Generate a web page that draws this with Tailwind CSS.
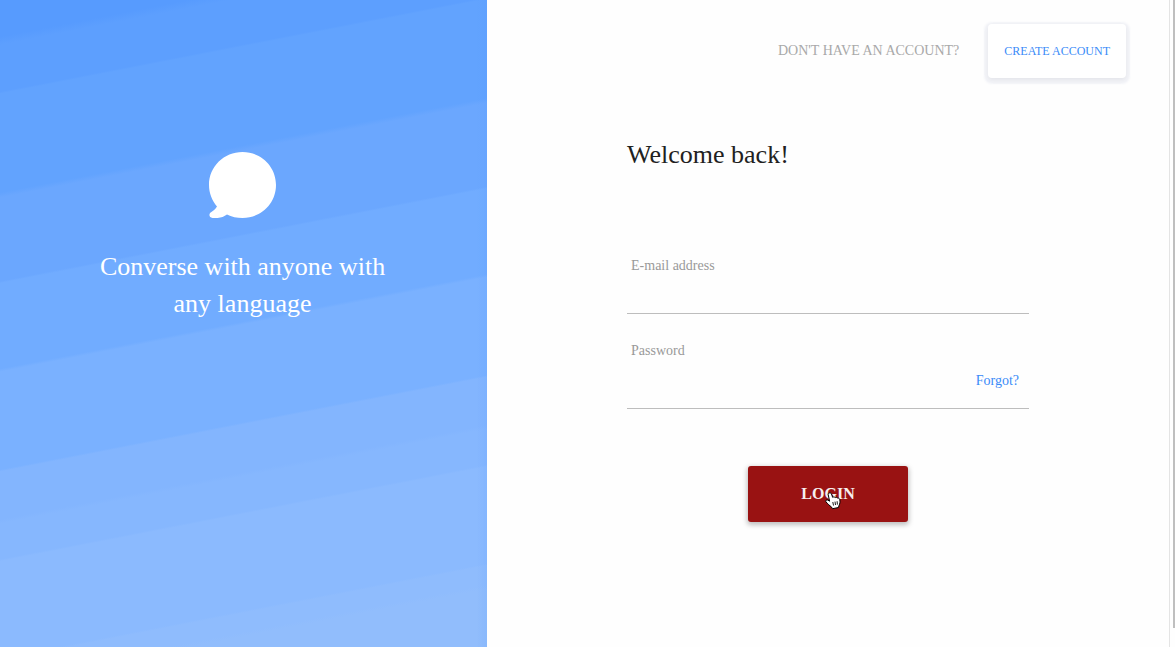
<!DOCTYPE html>
<html lang="en">
<head>
<meta charset="utf-8">
<meta name="viewport" content="width=device-width, initial-scale=1">
<title>Login</title>
<script src="https://cdn.jsdelivr.net/npm/@tailwindcss/browser@4"></script>
</head>
<body class="flex min-h-screen bg-[#fefefe] font-['Liberation_Serif',serif]">
  <div class="flex grow border-r border-[#e4e4e4]">
    <aside class="flex w-5/12 flex-col items-center bg-[linear-gradient(to_right,transparent_calc(100%-10px),rgb(80_150_255/0.12)),linear-gradient(169deg,#579bfe_36px,#5d9ffe_44px,#5d9ffe_90px,#62a3fe_92px,#62a3fe_189px,#6ba7fe_194px,#6ba7fe_276px,#71acff_278px,#71acff_362px,#7ab1ff_365px,#7ab1ff_461px,#83b5fe_463px,#83b5fe_510px,#86b7fe_514px,#86b7fe_549px,#8bbafe_551px,#8bbafe_646px,#8fbcfd_648px,#8fbcfd_667px,#91bdfc_671px)] pr-[82px] pl-20 pt-[152px] text-white">
      <svg class="h-[66px] w-[67px]" viewBox="0 0 67 66" fill="currentColor" aria-hidden="true">
        <path d="M33.500 0C52 0 67 14.500 67 33S52 66 33.500 66C28 66 22.500 65 18 62.500C14 65.500 9 66.500 3.500 66C0 65.700 -.5 62 2 60.300C4.500 58.800 6.500 57 8 54.500C3 48.500 0 41 0 33C0 14.500 15 0 33.500 0Z"/>
      </svg>
      <p class="mt-[30px] max-w-[320px] text-center text-[26px] leading-[37px]">Converse with anyone with any language</p>
    </aside>
    <main class="flex w-7/12 flex-col">
      <header class="flex items-center justify-end gap-[29px] pt-6 pr-[43px]">
        <span class="text-sm text-[#a9a9a9]">DON'T HAVE AN ACCOUNT?</span>
        <button type="button" class="h-[54px] rounded bg-white px-4 text-xs text-[#3a8bf8] shadow-[0_2px_2px_4px_rgb(70_80_160/0.06),0_2px_4px_rgb(60_60_80/0.08)]">CREATE ACCOUNT</button>
      </header>
      <form class="mx-auto mt-[61px] flex w-[402px] flex-col">
        <h1 class="text-[26px] leading-8 text-[#212121]">Welcome back!</h1>
        <div class="mt-[85px] flex flex-col border-b border-[#bdbdbd]">
          <label for="email" class="pl-1 text-sm leading-5 text-[#999]">E-mail address</label>
          <input id="email" type="email" class="h-[37px] w-full bg-transparent px-1 outline-none">
        </div>
        <div class="mt-[27px] flex flex-col border-b border-[#bdbdbd]">
          <label for="password" class="pl-1 text-sm leading-5 text-[#999]">Password</label>
          <div class="flex h-[47px] items-start pt-[10px]">
            <input id="password" type="password" class="h-5 min-w-0 grow bg-transparent px-1 outline-none">
            <a href="#" class="pr-[10px] text-sm leading-5 text-[#3a8bf8]">Forgot?</a>
          </div>
        </div>
        <button type="submit" class="relative mt-[57px] h-14 w-40 self-center rounded-[3px] bg-[#991212] text-base font-bold text-[#f6eeee] shadow-[0_2px_5px_1px_rgb(0_0_0/0.25)]">
          LOGIN
          <svg class="absolute top-[26px] left-[77px] h-[18px] w-[16px]" viewBox="0 0 16 18" aria-hidden="true">
            <path d="M4.200 1C5.300 .6 6.200 1.200 6.500 2L7.600 5.300C8.500 4.700 9.600 4.900 10.100 5.600C11 5 12.200 5.300 12.600 6.200C13.700 5.900 14.600 6.500 14.800 7.500C15.200 9.800 15 11.800 14 13.400L13.500 15.500L7.500 16.700L6.300 14.800C4.700 13.800 3 12 .9 9.800C.2 8.600 1.500 7.400 2.900 8.100L4.600 9.200L3.200 2.700C3 1.800 3.400 1.200 4.200 1Z" fill="#fff" stroke="#000" stroke-width="1" stroke-linejoin="round"/>
            <path d="M7.800 10L8.500 13.500M10 9.600L10.500 13M12.100 9.200L12.400 12.600" stroke="#000" stroke-width=".9"/>
          </svg>
        </button>
      </form>
    </main>
  </div>
  <div class="flex w-[5px] justify-end" aria-hidden="true">
    <div class="h-[97vh] w-[2px] bg-[#bfbfbf]"></div>
  </div>
</body>
</html>
